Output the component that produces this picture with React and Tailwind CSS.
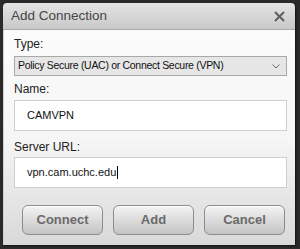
export default function App() {
  const font = { fontFamily: "'Liberation Sans', Arial, sans-serif" }
  return (
    <div className="w-[300px] h-[249px] bg-[#2a2a2a] pt-[3px] pl-[3px] overflow-hidden" style={font}>
      <div className="w-[292px] h-[242px] flex flex-col rounded-t-[4px] overflow-hidden shadow-[1px_1px_2px_rgba(0,0,0,0.6)]">
        {/* Title bar */}
        <div className="h-[27px] shrink-0 flex items-center justify-between pl-[8px] pr-[10px] bg-gradient-to-b from-[#e4e4e4] to-[#c9c9c9] border-b border-[#a9a9a9]">
          <span className="text-[13.5px] text-[#464646] leading-none">Add Connection</span>
          <svg width="11" height="11" viewBox="0 0 11 11" className="text-[#5e5e5e]">
            <path d="M1 1 L10 10 M10 1 L1 10" stroke="currentColor" strokeWidth="2" />
          </svg>
        </div>

        {/* Body */}
        <div className="flex-1 flex flex-col pl-[10px] pr-[8px] pt-[7px] bg-gradient-to-b from-[#fbfbfb] via-[#f6f6f6] to-[#d9d9d9] border-l border-[#d0d0d0]">
          <label className="text-[12px] leading-[14px] text-[#222]">Type:</label>
          <div className="mt-[5px] h-[20px] flex items-center justify-between pl-[3px] pr-[6px] bg-[#e6e6e6] border border-[#a8a8a8]">
            <span className="text-[10.5px] text-[#111] tracking-[-0.3px]">Policy Secure (UAC) or Connect Secure (VPN)</span>
            <svg width="8" height="5" viewBox="0 0 8 5">
              <path d="M0.5 0.5 L4 4 L7.5 0.5" fill="none" stroke="#666" strokeWidth="1" />
            </svg>
          </div>

          <label className="mt-[6px] text-[12px] leading-[14px] text-[#222]">Name:</label>
          <div className="mt-[4px] h-[31px] flex items-center pl-[12px] bg-white border border-[#cfcfcf]">
            <span className="text-[11px] text-[#111]">CAMVPN</span>
          </div>

          <label className="mt-[9px] text-[12px] leading-[14px] text-[#222]">Server URL:</label>
          <div className="mt-[3px] h-[31px] flex items-center pl-[12px] bg-white border border-[#cfcfcf]">
            <span className="text-[11px] text-[#111]">vpn.cam.uchc.edu</span>
            <span className="w-px h-[13px] bg-black ml-px" />
          </div>

          <div className="mt-[17px] flex gap-[10px] pl-[8px]">
            {['Connect', 'Add', 'Cancel'].map(b => (
              <button
                key={b}
                className="w-[81px] h-[30px] rounded-[6px] border border-[#8c8c8c] bg-gradient-to-b from-[#f4f4f4] to-[#c4c4c4] text-[13px] font-bold text-[#6a6a6a] shadow-[inset_0_1px_0_#fff]"
              >
                {b}
              </button>
            ))}
          </div>
        </div>
      </div>
    </div>
  )
}
